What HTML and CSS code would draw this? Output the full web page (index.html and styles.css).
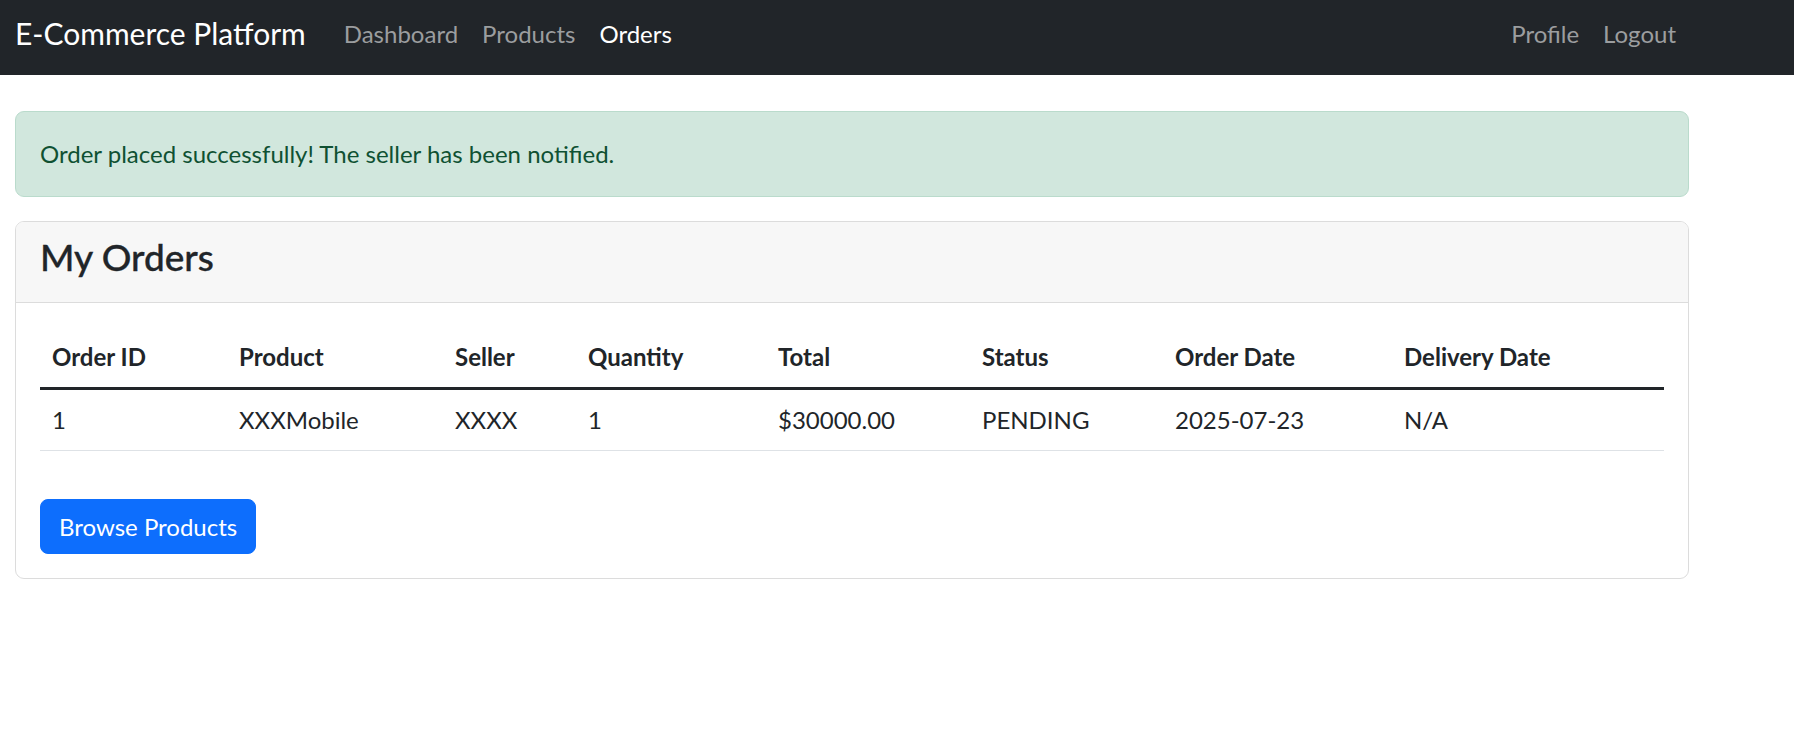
FILE: index.html
```html
<!DOCTYPE html>
<html lang="en">
<head>
<meta charset="utf-8">
<title>My Orders - E-Commerce Platform</title>
<link rel="stylesheet" href="styles.css">
</head>
<body>
<nav class="navbar">
  <div class="navbar-inner">
    <a class="brand" href="#">E-Commerce Platform</a>
    <ul class="nav">
      <li><a class="nav-link" href="#">Dashboard</a></li>
      <li><a class="nav-link" href="#">Products</a></li>
      <li><a class="nav-link active" href="#">Orders</a></li>
    </ul>
    <ul class="nav nav-right">
      <li><a class="nav-link" href="#">Profile</a></li>
      <li><a class="nav-link" href="#">Logout</a></li>
    </ul>
  </div>
</nav>

<main class="container">
  <div class="alert">Order placed successfully! The seller has been notified.</div>

  <section class="card">
    <header class="card-header">
      <h2 class="card-title">My Orders</h2>
    </header>
    <div class="card-body">
      <table class="table">
        <colgroup>
          <col class="c-id"><col class="c-product"><col class="c-seller"><col class="c-qty">
          <col class="c-total"><col class="c-status"><col class="c-date"><col class="c-delivery">
        </colgroup>
        <thead>
          <tr>
            <th>Order ID</th><th>Product</th><th>Seller</th><th>Quantity</th>
            <th>Total</th><th>Status</th><th>Order Date</th><th>Delivery Date</th>
          </tr>
        </thead>
        <tbody>
          <tr>
            <td>1</td><td>XXXMobile</td><td>XXXX</td><td>1</td>
            <td>$30000.00</td><td>PENDING</td><td>2025-07-23</td><td>N/A</td>
          </tr>
        </tbody>
      </table>
      <div class="actions">
        <a class="btn btn-primary" href="#">Browse Products</a>
      </div>
    </div>
  </section>
</main>
</body>
</html>
```
FILE: styles.css
```css
* { box-sizing: border-box; }

body {
  margin: 0;
  font-family: Lato, "Noto Sans", sans-serif;
  font-size: 24px;
  line-height: 36px;
  color: #212529;
  background: #fff;
}

a { text-decoration: none; }

/* Navbar */
.navbar {
  background: #212529;
  height: 75px;
}
.navbar-inner {
  max-width: 1703px;
  height: 100%;
  padding: 0 15px 8px;
  display: flex;
  align-items: center;
}
.brand {
  color: #fff;
  font-size: 30px;
  line-height: 45px;
  margin-right: 26px;
}
.nav {
  list-style: none;
  margin: 0;
  padding: 0;
  display: flex;
}
.nav-right { margin-left: auto; }
.nav-link {
  display: block;
  padding: 0 12px;
  color: #9b9d9f;
}
.nav-link.active { color: #fff; }

/* Main */
.container {
  max-width: 1704px;
  padding: 36px 15px 0;
}

.alert {
  background: #d1e7dd;
  border: 1px solid #badbcc;
  color: #0f5132;
  border-radius: 9px;
  padding: 24px;
  margin-bottom: 24px;
}

.card {
  border: 1px solid #dcdcdc;
  border-radius: 9px;
  overflow: hidden;
}
.card-header {
  background: #f7f7f7;
  border-bottom: 1px solid #dcdcdc;
  padding: 7px 24px 17px;
}
.card-title {
  margin: 0;
  font-size: 37px;
  line-height: 56px;
  font-weight: 500;
  -webkit-text-stroke: 0.35px #212529;
  color: #212529;
}
.card-body { padding: 24px; }

.table {
  width: 100%;
  border-collapse: collapse;
  table-layout: fixed;
}
.c-id { width: 187px; }
.c-product { width: 216px; }
.c-seller { width: 133px; }
.c-qty { width: 190px; }
.c-total { width: 204px; }
.c-status { width: 193px; }
.c-date { width: 229px; }
.c-delivery { width: 272px; }

.table th,
.table td {
  text-align: left;
  padding: 12px;
  white-space: nowrap;
}
.table th {
  font-weight: 700;
  border-bottom: 3px solid #212529;
}
.table td {
  border-bottom: 1px solid #dee2e6;
}

.actions { padding-top: 48px; }

.btn {
  display: inline-block;
  padding: 9px 18px 8px;
  border: 1px solid transparent;
  border-radius: 8px;
  font-size: 24px;
  line-height: 36px;
}
.btn-primary {
  background: #0d6efd;
  border-color: #0d6efd;
  color: #fff;
}
```
